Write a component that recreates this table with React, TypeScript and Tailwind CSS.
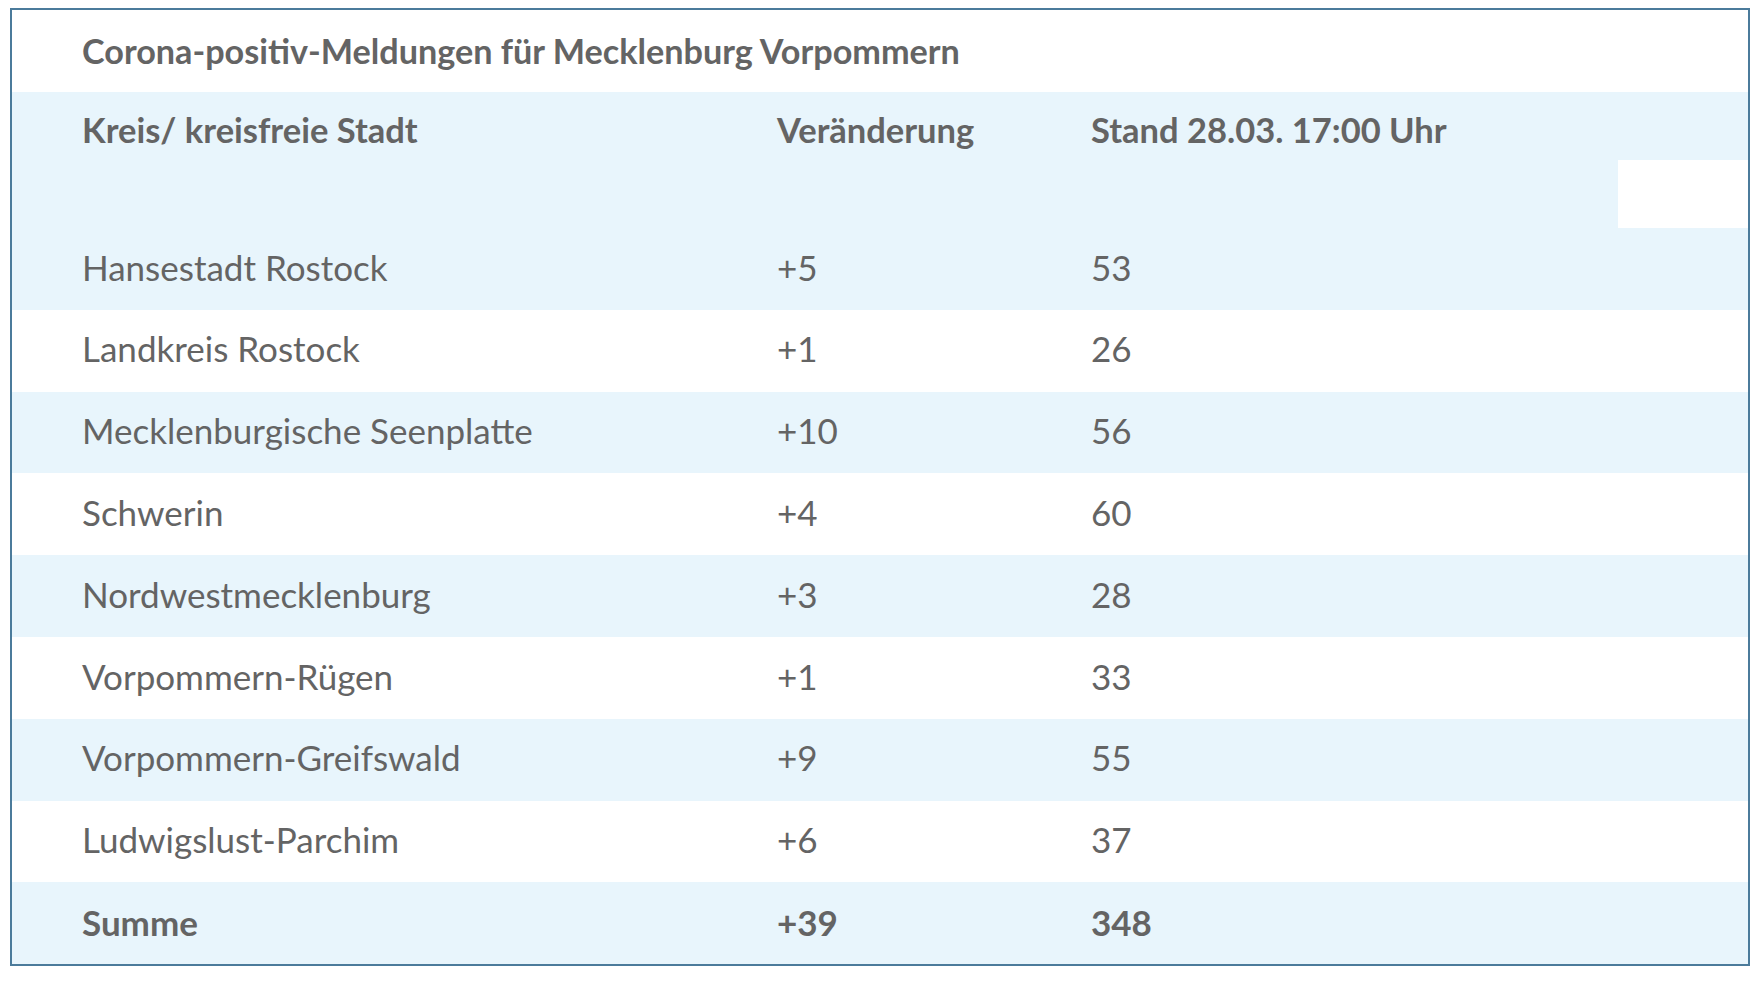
import React from "react";

const rows = [
  { name: "Hansestadt Rostock", diff: "+5", total: "53" },
  { name: "Landkreis Rostock", diff: "+1", total: "26" },
  { name: "Mecklenburgische Seenplatte", diff: "+10", total: "56" },
  { name: "Schwerin", diff: "+4", total: "60" },
  { name: "Nordwestmecklenburg", diff: "+3", total: "28" },
  { name: "Vorpommern-Rügen", diff: "+1", total: "33" },
  { name: "Vorpommern-Greifswald", diff: "+9", total: "55" },
  { name: "Ludwigslust-Parchim", diff: "+6", total: "37" },
];

export default function App() {
  return (
    <div className="min-h-screen w-full bg-white pt-[8px] pl-[10px] pr-[8px] font-['Lato','Liberation_Sans',sans-serif] text-[#646464]">
      <div className="w-[1740px] border-2 border-[#4b7b9b]">
        {/* Titel */}
        <div className="flex h-[82px] items-center pl-[70px] text-[34.2px] font-bold">
          Corona-positiv-Meldungen für Mecklenburg Vorpommern
        </div>

        {/* Kopfzeile */}
        <div className="bg-[#e8f5fc]">
          <div className="grid h-[68px] grid-cols-[765px_314px_1fr] pt-[19px] text-[34.5px] leading-[38px] font-bold">
            <div className="pl-[70px]">Kreis/ kreisfreie Stadt</div>
            <div>Veränderung</div>
            <div>Stand 28.03. 17:00 Uhr</div>
          </div>
          <div className="flex h-[68px] justify-end">
            <div className="h-full w-[130px] bg-white" />
          </div>
        </div>

        {/* Daten */}
        {rows.map((r, i) => (
          <div
            key={r.name}
            className={`grid h-[81.8px] grid-cols-[765px_314px_1fr] items-center pb-[4px] text-[35px] ${i % 2 === 0 ? "bg-[#e8f5fc]" : "bg-white"}`}
          >
            <div className="pl-[70px]">{r.name}</div>
            <div>{r.diff}</div>
            <div>{r.total}</div>
          </div>
        ))}
        <div className="grid h-[81.8px] grid-cols-[765px_314px_1fr] items-center bg-[#e8f5fc] pb-[2px] text-[35px] font-bold">
          <div className="pl-[70px]">Summe</div>
          <div>+39</div>
          <div>348</div>
        </div>
      </div>
    </div>
  );
}
